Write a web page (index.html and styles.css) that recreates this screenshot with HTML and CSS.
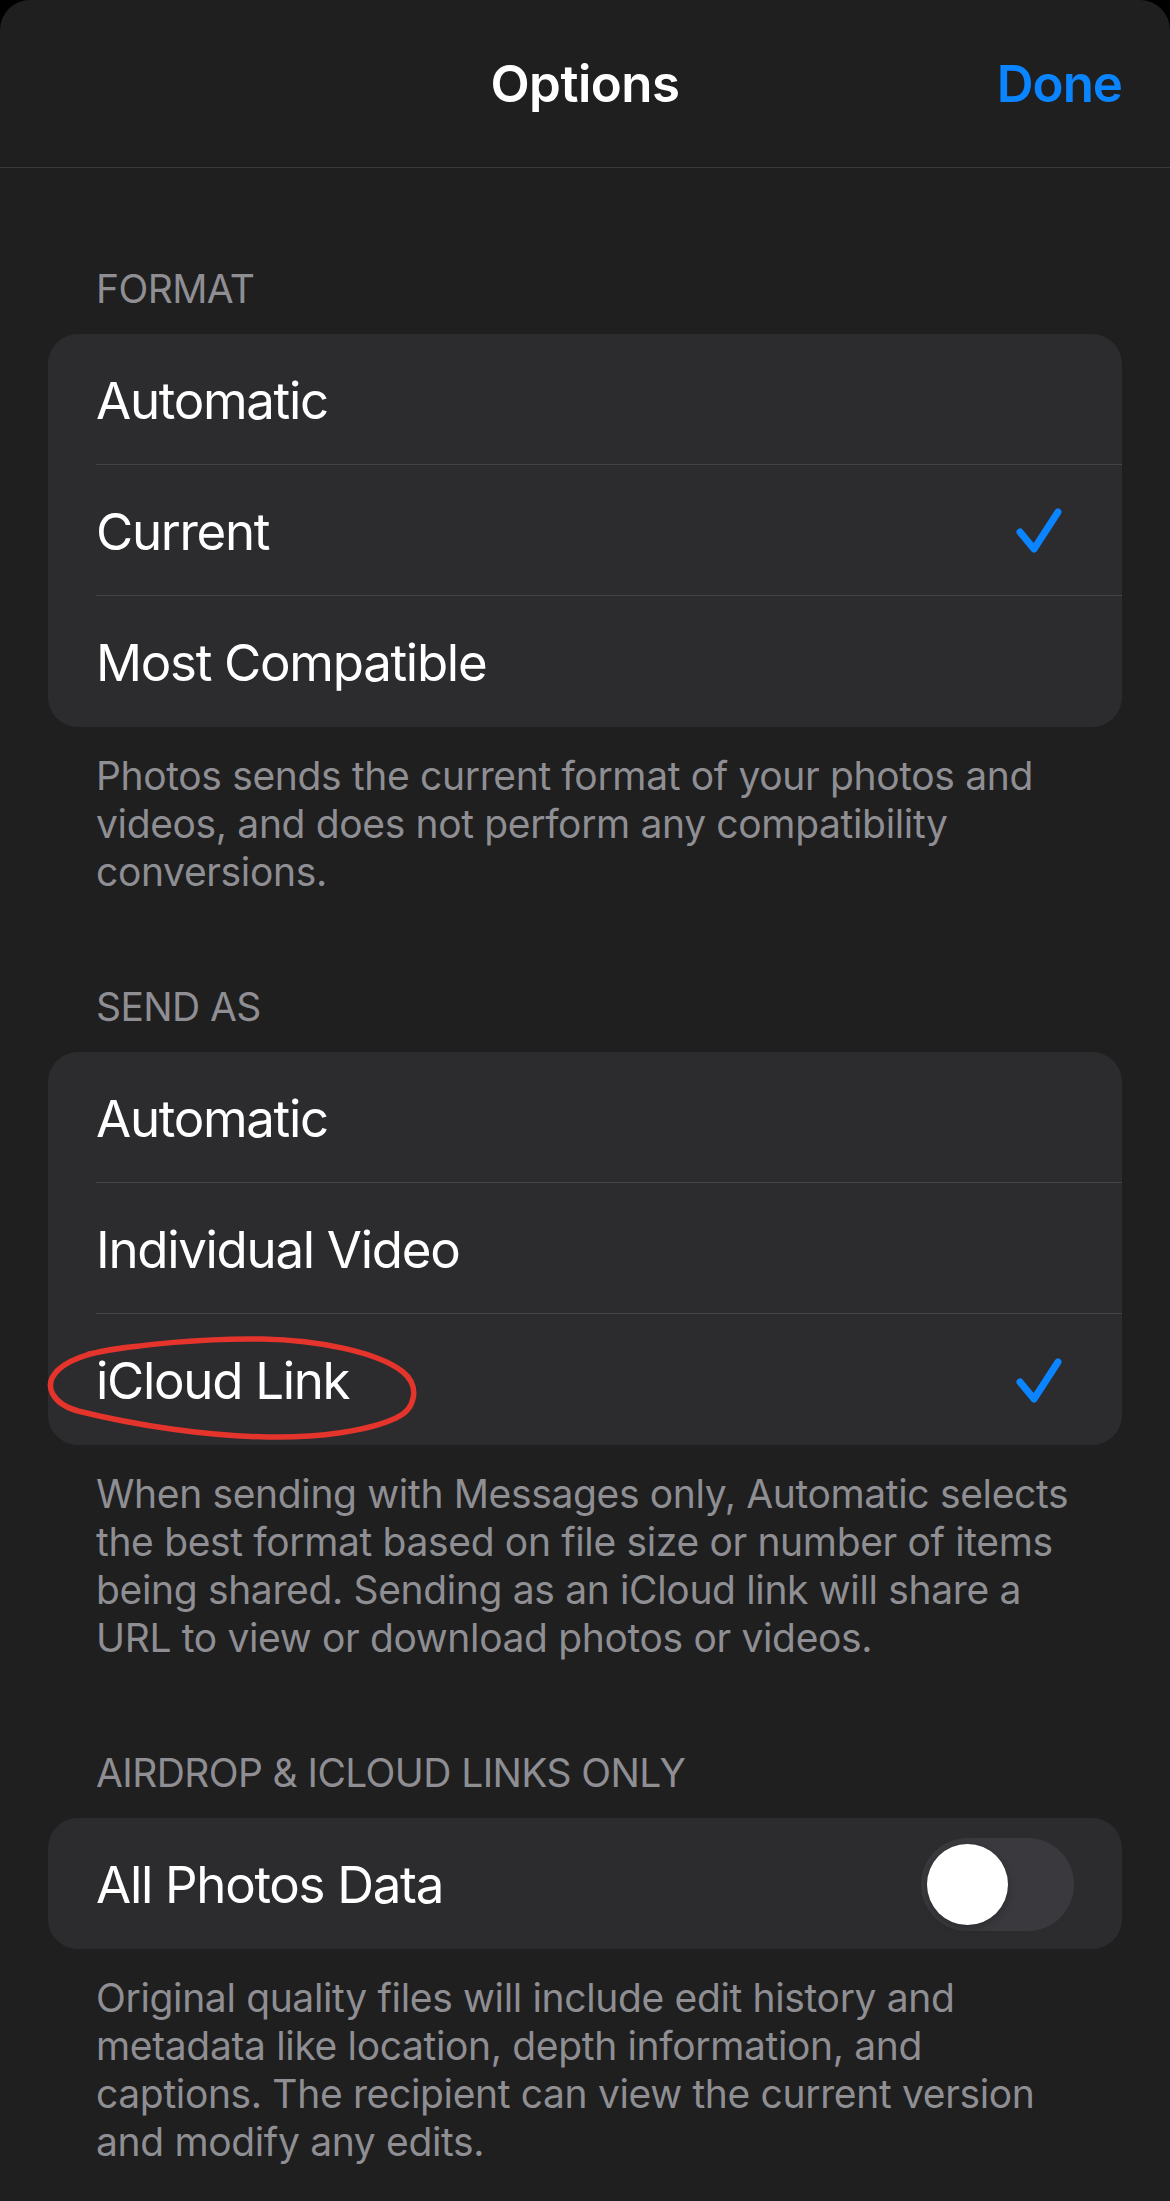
FILE: index.html
```html
<!DOCTYPE html>
<html lang="en">
<head>
    <meta charset="UTF-8">
    <meta name="viewport" content="width=device-width, initial-scale=1.0">
    <title>Options</title>
    <link rel="stylesheet" href="styles.css">
</head>
<body>
    <div class="sheet">
        <header class="nav-bar">
            <span class="nav-spacer"></span>
            <h1 class="nav-title">Options</h1>
            <a class="nav-done" href="#">Done</a>
        </header>

        <section class="group">
            <h2 class="group-header">FORMAT</h2>
            <ul class="group-list">
                <li class="row"><span class="row-label">Automatic</span></li>
                <li class="row">
                    <span class="row-label">Current</span>
                    <svg class="check" viewBox="0 0 52 48" width="52" height="48">
                        <polyline points="7,25 21,42 45,5" />
                    </svg>
                </li>
                <li class="row"><span class="row-label">Most Compatible</span></li>
            </ul>
            <p class="group-footer">Photos sends the current format of your photos and<br>videos, and does not perform any compatibility<br>conversions.</p>
        </section>

        <section class="group">
            <h2 class="group-header">SEND AS</h2>
            <ul class="group-list">
                <li class="row"><span class="row-label">Automatic</span></li>
                <li class="row"><span class="row-label">Individual Video</span></li>
                <li class="row">
                    <span class="row-label">iCloud Link</span>
                    <svg class="check" viewBox="0 0 52 48" width="52" height="48">
                        <polyline points="7,25 21,42 45,5" />
                    </svg>
                    <!-- hand-drawn markup circle over the row -->
                    <svg class="scribble" viewBox="-10 0 380 132" width="380" height="132">
                        <path d="M41 40 C90 30 160 24 214 25 C270 26 330 38 355 58 C372 72 368 95 348 104 C320 117 270 124 220 123 C160 122 90 112 30 97 C5 90 -6 72 10 56 C25 42 55 35 92 32" />
                    </svg>
                </li>
            </ul>
            <p class="group-footer">When sending with Messages only, Automatic selects<br>the best format based on file size or number of items<br>being shared. Sending as an iCloud link will share a<br>URL to view or download photos or videos.</p>
        </section>

        <section class="group">
            <h2 class="group-header">AIRDROP &amp; ICLOUD LINKS ONLY</h2>
            <ul class="group-list">
                <li class="row">
                    <span class="row-label">All Photos Data</span>
                    <span class="toggle"><span class="toggle-knob"></span></span>
                </li>
            </ul>
            <p class="group-footer">Original quality files will include edit history and<br>metadata like location, depth information, and<br>captions. The recipient can view the current version<br>and modify any edits.</p>
        </section>
    </div>
</body>
</html>
```

FILE: styles.css
```css
body {
    margin: 0;
    background-color: #000000;
    font-family: Inter, "Noto Sans", sans-serif;
    color: #ffffff;
}

.sheet {
    min-height: 2201px;
    background-color: #1f1f20;
    border-radius: 30px 30px 0 0;
}

.nav-bar {
    height: 168px;
    display: grid;
    grid-template-columns: 1fr auto 1fr;
    align-items: center;
    padding: 0 48px;
    border-bottom: 1px solid #3a3a3c;
    box-sizing: border-box;
}

.nav-title {
    margin: 0;
    font-size: 51px;
    font-weight: 600;
    letter-spacing: -0.5px;
}

.nav-done {
    justify-self: end;
    color: #0a84ff;
    font-size: 51px;
    font-weight: 600;
    text-decoration: none;
    letter-spacing: -1px;
}

.group {
    padding: 96px 48px 0;
}

.group + .group {
    padding-top: 86px;
}

.group-header {
    margin: 0 0 21px 48px;
    padding-top: 1px;
    font-size: 39px;
    font-weight: 400;
    line-height: 48px;
    color: #8e8e93;
    letter-spacing: -0.6px;
}

.group-list {
    list-style: none;
    margin: 0;
    padding: 0;
    background-color: #2c2c2e;
    border-radius: 30px;
}

.row {
    position: relative;
    height: 131px;
    margin-left: 48px;
    padding: 2px 48px 0 0;
    display: flex;
    align-items: center;
    justify-content: space-between;
    border-bottom: 1px solid #434347;
    box-sizing: border-box;
}

.row:last-child {
    border-bottom: none;
}

.row-label {
    font-size: 51px;
    letter-spacing: -1.3px;
}

.check {
    margin-right: 9px;
}

.check polyline {
    fill: none;
    stroke: #0a84ff;
    stroke-width: 7;
    stroke-linecap: round;
    stroke-linejoin: round;
}

.scribble {
    position: absolute;
    left: -58px;
    top: 0;
}

.scribble path {
    fill: none;
    stroke: #e5342b;
    stroke-width: 5.5;
    stroke-linecap: round;
}

.toggle {
    width: 153px;
    height: 93px;
    border-radius: 47px;
    background-color: #3a3a3e;
    display: flex;
    align-items: center;
    padding: 0 6px;
    box-sizing: border-box;
}

.toggle-knob {
    width: 81px;
    height: 81px;
    border-radius: 50%;
    background-color: #ffffff;
    box-shadow: 0 3px 8px rgba(0, 0, 0, 0.25);
}

.group-footer {
    margin: 25px 0 0 48px;
    font-size: 39px;
    line-height: 48px;
    color: #8e8e93;
    white-space: nowrap;
    letter-spacing: -0.35px;
}
```
